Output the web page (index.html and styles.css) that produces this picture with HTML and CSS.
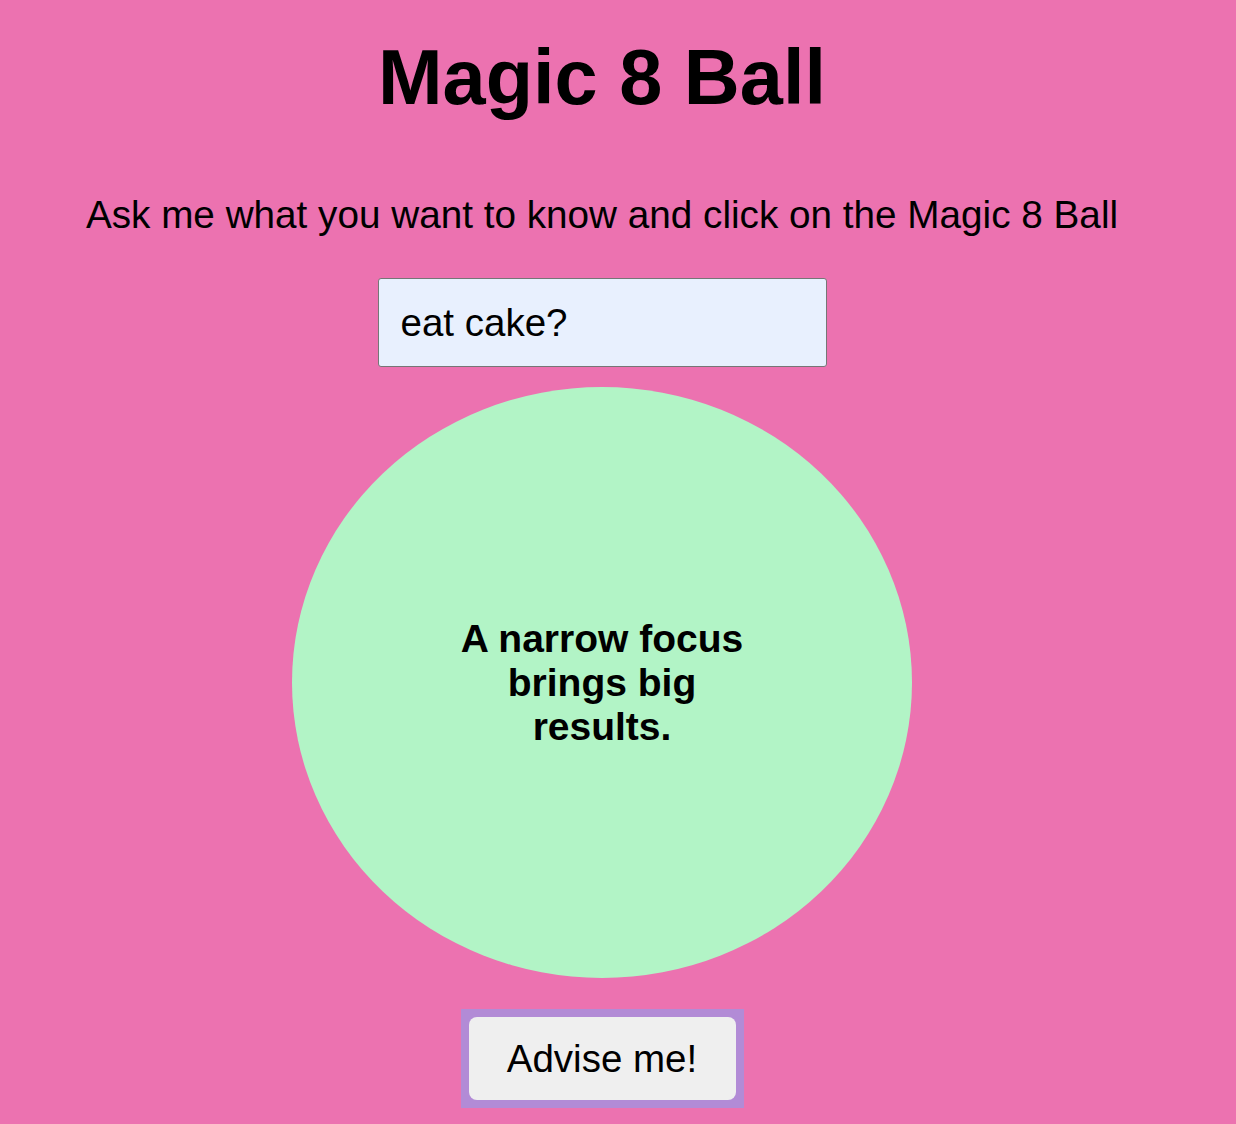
FILE: index.html
```html
<!DOCTYPE html>
<html>
<head>
<meta charset="utf-8">
<title>Magic 8 Ball</title>
<link rel="stylesheet" href="styles.css">
</head>
<body>
<main class="page">
  <h1 class="title">Magic 8 Ball</h1>
  <p class="prompt">Ask me what you want to know and click on the Magic 8 Ball</p>
  <input class="question" type="text" value="eat cake?">
  <div class="ball">
    <p class="answer">A narrow focus brings big results.</p>
  </div>
  <div class="btn-wrap">
    <button class="advise">Advise me!</button>
  </div>
</main>
</body>
</html>
```
FILE: styles.css
```css
html, body {
  margin: 0;
  padding: 0;
  background: #ec72b0;
}
body {
  font-family: "Liberation Sans", Arial, sans-serif;
  color: #000;
}
.page {
  display: flex;
  flex-direction: column;
  align-items: center;
  width: 1204px;
}
.title {
  margin: 33px 0 0;
  font-size: 77.5px;
  line-height: 88px;
  font-weight: bold;
}
.prompt {
  margin: 72px 0 0;
  font-size: 38.7px;
  line-height: 44px;
}
.question {
  box-sizing: border-box;
  margin-top: 41px;
  width: 449px;
  height: 89px;
  padding: 0 22px;
  border: 1px solid #767676;
  border-radius: 3px;
  background: #e8f0fe;
  font-family: "Liberation Sans", Arial, sans-serif;
  font-size: 38.5px;
  color: #000;
}
.ball {
  margin-top: 20px;
  width: 620px;
  height: 591px;
  border-radius: 50%;
  background: #b2f4c6;
  display: flex;
  align-items: center;
  justify-content: center;
}
.answer {
  margin: 0;
  width: 300px;
  text-align: center;
  font-weight: bold;
  font-size: 39px;
  line-height: 44px;
}
.btn-wrap {
  margin-top: 31px;
  padding: 8px;
  background: #b28bd6;
}
.advise {
  display: block;
  box-sizing: border-box;
  width: 267px;
  height: 83px;
  border: none;
  border-radius: 8px;
  background: #efefef;
  font-family: "Liberation Sans", Arial, sans-serif;
  font-size: 38.5px;
  color: #000;
}
```
